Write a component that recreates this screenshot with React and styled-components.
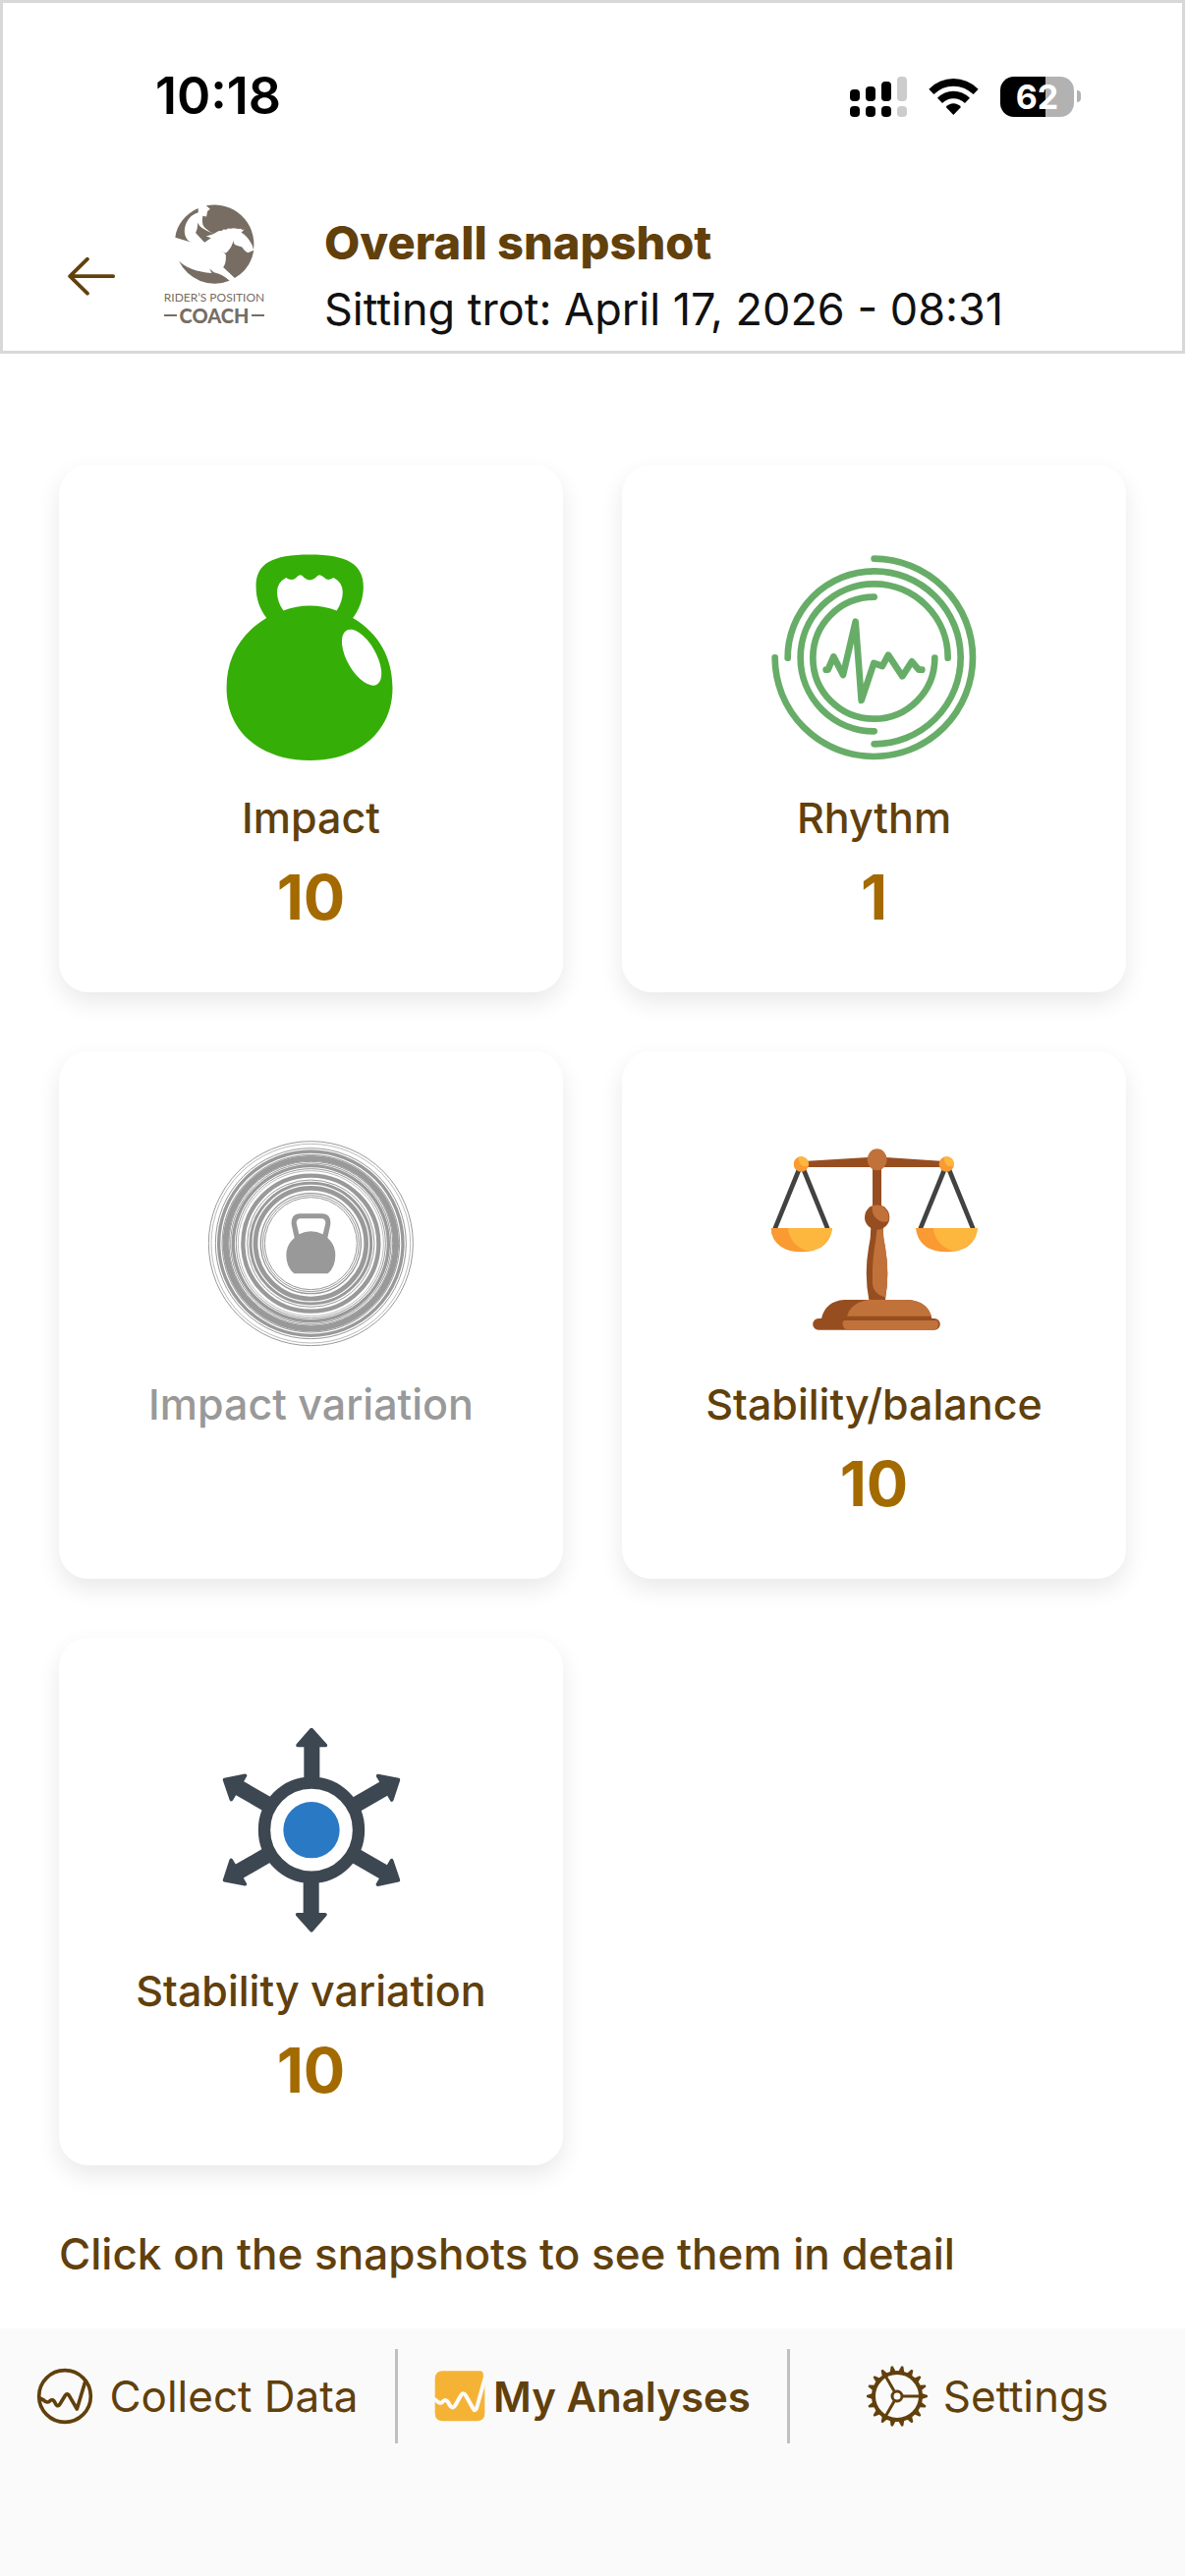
import React from "react";
import styled, { createGlobalStyle } from "styled-components";

const GlobalStyle = createGlobalStyle`
  * {
    box-sizing: border-box;
  }
  body {
    margin: 0;
    background: #fff;
    font-family: Inter, "Liberation Sans", sans-serif;
    color: #61400c;
  }
  button {
    font-family: inherit;
    color: inherit;
    border: 0;
    padding: 0;
    background: none;
    cursor: pointer;
  }
  svg {
    display: block;
    flex-shrink: 0;
  }
`;

const Page = styled.div`
  display: flex;
  flex-direction: column;
  min-height: 100vh;
`;

const Header = styled.header`
  border: 3px solid #d8d8d8;
  background: #fff;
`;

const StatusBar = styled.div`
  display: flex;
  align-items: center;
  justify-content: space-between;
  padding: 62px 103px 0 155px;
  color: #000;
`;

const Time = styled.time`
  font-size: 52px;
  line-height: 66px;
  font-weight: 600;
`;

const StatusIcons = styled.div`
  display: flex;
  align-items: center;
  gap: 22px;
`;

const Battery = styled.div`
  display: flex;
  align-items: center;
  gap: 3px;
  &:after {
    content: "";
    width: 4px;
    height: 12px;
    border-radius: 0 6px 6px 0;
    background: #b2b2b2;
  }
`;

const BatteryLevel = styled.span`
  width: 75px;
  height: 41px;
  border-radius: 14px;
  background: linear-gradient(
    90deg,
    #000 ${(props) => props.$level}%,
    #b2b2b2 ${(props) => props.$level}%
  );
  color: #fff;
  font-size: 34px;
  line-height: 41px;
  font-weight: 700;
  text-align: center;
`;

const TitleBar = styled.div`
  display: flex;
  align-items: center;
  min-height: 149px;
  margin-top: 77px;
  padding: 0 60px 3px 64px;
`;

const BackButton = styled.button`
  display: flex;
`;

const Logo = styled.div`
  display: flex;
  flex-direction: column;
  align-items: center;
  align-self: flex-start;
  width: 112px;
  margin: 0 56px 0 43px;
  color: #776d63;
  font-family: Lato, sans-serif;
  white-space: nowrap;
`;

const LogoName = styled.span`
  margin-top: 6px;
  font-size: 12px;
  line-height: 16px;
`;

const LogoCoach = styled.span`
  display: flex;
  align-items: center;
  gap: 3px;
  font-size: 20px;
  line-height: 20px;
  font-weight: 900;
  &:before,
  &:after {
    content: "";
    width: 13px;
    height: 2px;
    background: #776d63;
  }
`;

const Title = styled.h1`
  margin: 0;
  font-size: 47px;
  line-height: 68px;
  font-weight: 800;
`;

const Subtitle = styled.p`
  margin: 0;
  color: #111;
  font-size: 45px;
  line-height: 68px;
`;

const Main = styled.main`
  flex: 1;
  padding: 113px 60px 45px;
`;

const Grid = styled.div`
  display: grid;
  grid-template-columns: 1fr 1fr;
  grid-auto-rows: 1fr;
  gap: 60px;
`;

const Card = styled.button`
  display: flex;
  flex-direction: column;
  align-items: center;
  padding: 91px 20px 61px;
  border-radius: 30px;
  background: #fff;
  box-shadow: 0 10px 24px rgba(0, 0, 0, 0.09);
  &:disabled {
    color: #999;
    cursor: default;
  }
`;

const CardLabel = styled.span`
  margin-top: 33px;
  font-size: 43px;
  line-height: 50px;
  font-weight: 500;
`;

const CardValue = styled.span`
  margin-top: 20px;
  color: #a36a00;
  font-size: 63px;
  line-height: 72px;
  font-weight: 700;
`;

const Hint = styled.p`
  margin: 60px 0 0;
  font-size: 44px;
  line-height: 60px;
  font-weight: 500;
`;

const TabBar = styled.nav`
  display: grid;
  grid-template-columns: repeat(3, 1fr);
  padding: 21px 0 135px;
  background: #fafafa;
`;

const Tab = styled.a`
  display: flex;
  align-items: center;
  justify-content: center;
  gap: ${(props) => (props.$active ? 8 : 16)}px;
  height: 96px;
  color: inherit;
  font-size: ${(props) => (props.$active ? 42 : 44)}px;
  font-weight: ${(props) => (props.$active ? 600 : 400)};
  text-decoration: none;
  white-space: nowrap;
  &:nth-child(2) {
    border: solid #c0c0c0;
    border-width: 0 3px;
  }
`;

const SignalIcon = () => (
  <svg width="58" height="41" viewBox="0 0 58 41">
    <rect x="0" y="13" width="10" height="12" rx="4" />
    <rect x="16" y="10" width="10" height="15" rx="4" />
    <rect x="32" y="5" width="10" height="20" rx="4" />
    <rect x="48" y="0" width="10" height="25" rx="4" fill="#ccc" />
    <rect x="0" y="30" width="10" height="11" rx="4" />
    <rect x="16" y="30" width="10" height="11" rx="4" />
    <rect x="32" y="30" width="10" height="11" rx="4" />
    <rect x="48" y="30" width="10" height="11" rx="4" fill="#ccc" />
  </svg>
);

const WifiIcon = () => (
  <svg width="51" height="37" viewBox="376 117 151 111">
    <path d="M376 149Q408 117 451 117T527 149L512 165Q485 140 451 140T391 165Z" />
    <path d="M402 176Q423 155 451 155T501 176L486 192Q471 178 451 178T417 192Z" />
    <path d="M428 204Q438 193 451 193T474 204L451 228Z" />
  </svg>
);

const BackIcon = () => (
  <svg width="52" height="40" viewBox="205 786 148 119">
    <path
      d="M345 846H214M267 794L214 846L267 898"
      fill="none"
      stroke="#61400c"
      strokeWidth="11"
      strokeLinecap="round"
      strokeLinejoin="round"
    />
  </svg>
);

const HorseLogo = () => (
  <svg width="81" height="81" viewBox="536 625 242 242" fill="#776d63">
    <path d="M607 637C568 653 541 688 537 726L587 741C563 732 561 702 571 681Q584 656 607 650Z" />
    <path d="M631 629A120 120 0 0 1 775 763Q773 750 766 740Q755 721 738 711L747 701L740 703L737 699L728 700Q714 695 706 699L698 698L692 702L684 701L678 706L670 706Q661 711 654 715Q626 700 621 687Q618 673 621 660L632 662L635 646L643 639Z" />
    <path d="M606 681Q610 698 655 715L631 722L646 727L626 741L599 712Q605 700 606 681Z" />
    <path d="M715 732Q712 746 721 749L740 755Q749 769 758 772L776 765A120 120 0 0 1 718 849L683 816Q692 805 691 779Q685 770 673 765L690 774Q709 759 715 732Z" />
    <path d="M548 797Q580 830 648 834L641 821L655 832Q681 838 702 857A120 120 0 0 1 548 797Z" />
  </svg>
);

const KettlebellIcon = () => (
  <svg
    width="210"
    height="210"
    viewBox="480 324 588 549"
    preserveAspectRatio="none"
  >
    <path
      fill="#36ae08"
      fillRule="evenodd"
      d="M646 494C626 470 616 442 616 411C615 350 660 325 769 325C875 325 922 350 922 411C922 442 910 473 892 494C966 535 1005 600 1005 680C1005 795 910 873 769 873C628 873 532 795 532 680C532 600 572 535 646 494ZM694 474Q769 449 846 474Q863 449 863 425Q863 400 837 387Q821 397 810 386Q795 372 786 387Q769 400 753 387Q743 372 729 388Q715 397 702 387Q675 400 676 427Q677 452 694 474Z"
    />
    <ellipse
      cx="917"
      cy="599"
      rx="41"
      ry="84"
      fill="#fff"
      transform="rotate(-32 917 599)"
    />
  </svg>
);

const RhythmIcon = () => (
  <svg
    width="210"
    height="210"
    viewBox="133 102 630 630"
    fill="none"
    stroke="#67ad68"
    strokeWidth="20"
    strokeLinecap="round"
    strokeLinejoin="round"
  >
    <path d="M447 116A302 302 0 1 1 144 418" />
    <path d="M183 419A264 264 0 1 1 447 682" />
    <path d="M447 643A225 225 0 1 1 672 419" />
    <path d="M447 233A186 186 0 1 0 632 419" />
    <path d="M300 455H306L323 415L352 471L390 308L408 549L446 435L472 444L490 410L533 475L562 430L583 455H593" />
  </svg>
);

// [radius, stroke width] from the outside in
const rings = [
  [312, 3],
  [304, 2],
  [291, 3],
  [281, 10],
  [271, 3],
  [260, 18],
  [250, 3],
  [245, 3],
  [237, 10],
  [228, 3],
  [222, 2],
  [207, 13],
  [194, 3],
  [184, 9],
  [169, 14],
  [153, 4],
  [147, 3],
  [141, 3],
];

const ImpactVariationIcon = () => (
  <svg width="210" height="210" viewBox="65 62 630 630" fill="#999">
    {rings.map(([r, width]) => (
      <circle
        key={r}
        cx="378"
        cy="376"
        r={r}
        fill="none"
        stroke="#999"
        strokeWidth={width}
      />
    ))}
    <path
      fillRule="evenodd"
      d="M328 359L319 318Q317 286 343 285H414Q440 286 438 318L429 359Q453 380 453 412Q453 448 430 468H327Q303 448 303 412Q303 380 328 359ZM342 348Q378 330 415 348L423 314Q423 300 410 300H347Q334 300 334 314Z"
    />
  </svg>
);

const Pan = ({ x }) => (
  <g transform={`translate(${x} 0)`}>
    <path
      d="M160 150L86 332M173 150L247 332"
      stroke="#414342"
      strokeWidth="14"
    />
    <circle cx="166" cy="135" r="23" fill="#f99a33" />
    <path d="M158 113A23 23 0 0 1 188 140Q160 148 158 113Z" fill="#fdb73e" />
    <path d="M72 330H261Q252 402 166 403Q81 402 72 330Z" fill="#f99a33" />
    <path d="M125 330H261Q252 390 188 401Q134 386 125 330Z" fill="#fdb73e" />
  </g>
);

const ScalesIcon = () => (
  <svg width="210" height="210" viewBox="75 63 630 630">
    <path
      d="M186 125L370 114H425L592 125V144H411V270H384V144H186Z"
      fill="#964e21"
    />
    <ellipse cx="398" cy="121" rx="30" ry="33" fill="#c1723a" />
    <Pan x={0} />
    <Pan x={444} />
    <path
      d="M379 325H416Q416 360 423 390Q436 470 423 550H373Q358 470 372 390Q379 360 379 325Z"
      fill="#964e21"
    />
    <path
      d="M398 333H416Q416 360 423 390Q437 470 423 542Q385 530 384 500V450Q386 410 393 372Z"
      fill="#c1723a"
    />
    <circle cx="398" cy="297" r="38" fill="#964e21" />
    <path
      d="M383 262A38 38 0 0 1 432 309Q417 315 402 306Q380 292 383 262Z"
      fill="#c1723a"
    />
    <path
      d="M228 606Q240 553 298 549H495Q554 555 565 606H573A17 17 0 0 1 573 641H219A17 17 0 0 1 219 606Z"
      fill="#964e21"
    />
    <path d="M306 599Q318 558 370 549H495Q552 555 564 599Z" fill="#c1723a" />
    <path d="M296 612H580A17 17 0 0 1 573 641H305Q286 630 296 612Z" fill="#c1723a" />
  </svg>
);

const ArrowsIcon = () => (
  <svg width="210" height="210" viewBox="36 84 630 630">
    {[0, 60, 120, 180, 240, 300].map((angle) => (
      <path
        key={angle}
        d="M328 250V145H309Q301 143 305 136L347 88Q351 84 355 88L398 136Q402 143 395 145H376V250Z"
        fill="#3d4752"
        transform={`rotate(${angle} 351 398)`}
      />
    ))}
    <circle
      cx="351"
      cy="398"
      r="144"
      fill="#fff"
      stroke="#3d4752"
      strokeWidth="37"
    />
    <circle cx="351" cy="398" r="86" fill="#2a79c4" />
  </svg>
);

const CollectIcon = () => (
  <svg
    width="58"
    height="58"
    viewBox="108 118 174 174"
    fill="none"
    stroke="#61400c"
    strokeWidth="11"
    strokeLinecap="round"
    strokeLinejoin="round"
  >
    <circle cx="195" cy="205" r="79" />
    <path d="M118 211L130 217Q143 228 150 219Q158 212 164 223Q172 242 180 229L196 203Q202 194 208 203L232 244L258 158" />
  </svg>
);

const AnalysesIcon = () => (
  <svg width="52" height="52" viewBox="129 127 156 156">
    <path
      d="M154 128H268Q279 129 278 138L283 170V257Q283 281 259 281H155Q131 281 131 257V151Q132 129 154 128Z"
      fill="#f5b335"
    />
    <path
      d="M122 211L134 217Q147 232 156 221Q164 212 172 225Q184 250 194 231L210 203Q217 190 225 203L247 242Q253 254 258 242L285 146"
      fill="none"
      stroke="#fafafa"
      strokeWidth="12"
      strokeLinejoin="round"
    />
  </svg>
);

const GearIcon = () => (
  <svg
    width="62"
    height="62"
    viewBox="-31 -31 62 62"
    fill="none"
    stroke="#61400c"
    strokeWidth="3"
  >
    <circle r="24" strokeWidth="4" />
    <circle r="5" />
    {[0, 120, 240].map((angle) => (
      <path key={angle} d="M6 0H23" transform={`rotate(${angle})`} />
    ))}
    {[...Array(18)].map((x, i) => (
      <path
        key={i}
        d="M25 -3L31 -1V1L25 3Z"
        fill="#61400c"
        stroke="none"
        transform={`rotate(${i * 20})`}
      />
    ))}
  </svg>
);

const snapshots = [
  { label: "Impact", value: 10, icon: <KettlebellIcon /> },
  { label: "Rhythm", value: 1, icon: <RhythmIcon /> },
  { label: "Impact variation", icon: <ImpactVariationIcon /> },
  { label: "Stability/balance", value: 10, icon: <ScalesIcon /> },
  { label: "Stability variation", value: 10, icon: <ArrowsIcon /> },
];

const tabs = [
  { label: "Collect Data", href: "#collect", icon: <CollectIcon /> },
  {
    label: "My Analyses",
    href: "#analyses",
    icon: <AnalysesIcon />,
    active: true,
  },
  { label: "Settings", href: "#settings", icon: <GearIcon /> },
];

const App = () => {
  return (
    <Page>
      <GlobalStyle />
      <Header>
        <StatusBar>
          <Time>10:18</Time>
          <StatusIcons>
            <SignalIcon />
            <WifiIcon />
            <Battery>
              <BatteryLevel $level={62}>62</BatteryLevel>
            </Battery>
          </StatusIcons>
        </StatusBar>
        <TitleBar>
          <BackButton type="button" aria-label="Back">
            <BackIcon />
          </BackButton>
          <Logo>
            <HorseLogo />
            <LogoName>RIDER’S POSITION</LogoName>
            <LogoCoach>COACH</LogoCoach>
          </Logo>
          <div>
            <Title>Overall snapshot</Title>
            <Subtitle>Sitting trot: April 17, 2026 - 08:31</Subtitle>
          </div>
        </TitleBar>
      </Header>
      <Main>
        <Grid>
          {snapshots.map(({ label, value, icon }) => (
            <Card key={label} type="button" disabled={value === undefined}>
              {icon}
              <CardLabel>{label}</CardLabel>
              {value !== undefined && <CardValue>{value}</CardValue>}
            </Card>
          ))}
        </Grid>
        <Hint>Click on the snapshots to see them in detail</Hint>
      </Main>
      <TabBar>
        {tabs.map(({ label, href, icon, active }) => (
          <Tab
            key={label}
            href={href}
            $active={active}
            aria-current={active ? "page" : undefined}
          >
            {icon}
            {label}
          </Tab>
        ))}
      </TabBar>
    </Page>
  );
};

export default App;
